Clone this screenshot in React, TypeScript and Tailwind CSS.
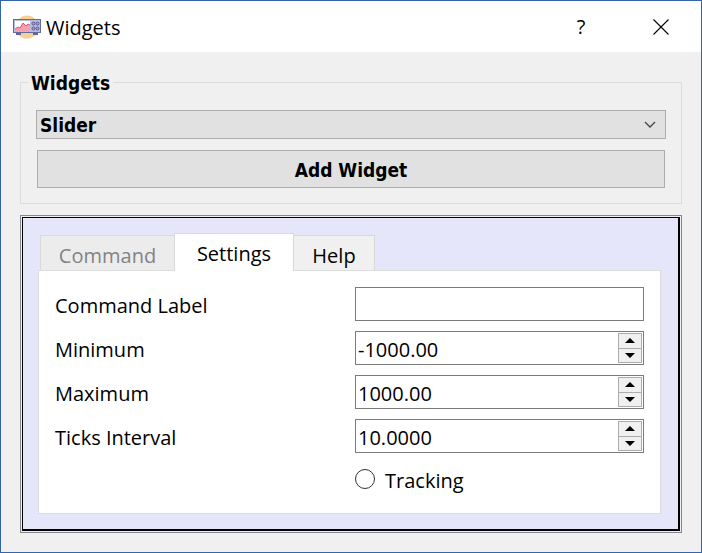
import { useState } from "react";

function AppIcon() {
  return (
    <svg width="28" height="24" viewBox="0 0 28 24" aria-hidden="true">
      <circle cx="14" cy="12" r="11.500" fill="#f7cf94" />
      <path d="M3 18h5v2H3zM20 18h5v2h-5z" fill="#5f669c" />
      <rect x="0.5" y="4.5" width="27" height="13" fill="#b3bde4" stroke="#626a9e" />
      <rect x="2" y="6" width="15" height="10" fill="#fff" />
      <path d="M2 14l3-2 2 1 3-5 3 3 2-2 2 1v6h-15z" fill="#f7a0ad" />
      <path d="M2 14l3-2 2 1 3-5 3 3 2-2 2 1" fill="none" stroke="#dc5570" />
      <g fill="#b79cc4" stroke="#5d5792">
        <circle cx="20.500" cy="8.500" r="1.500" />
        <circle cx="24.500" cy="8.500" r="1.500" />
        <circle cx="20.500" cy="13.500" r="1.500" />
        <circle cx="24.500" cy="13.500" r="1.500" />
      </g>
    </svg>
  );
}

function TitleBar() {
  return (
    <header className="flex h-[51px] items-center bg-white pr-4 pl-3">
      <AppIcon />
      <h1 className="ml-[5px] flex-1 pt-0.5 text-[20px] leading-6">Widgets</h1>
      <button type="button" aria-label="Help" className="h-10 w-12 text-[20px] leading-6">
        ?
      </button>
      <button type="button" aria-label="Close" className="ml-8 flex h-10 w-12 items-center justify-center">
        <svg width="16" height="16" viewBox="0 0 16 16" aria-hidden="true">
          <path d="M0.500 0.500l15 15M15.500 0.500l-15 15" stroke="#000" strokeWidth="1.100" />
        </svg>
      </button>
    </header>
  );
}

function SpinBox({ id, initial, decimals, step }: { id: string; initial: number; decimals: number; step: number }) {
  const [text, setText] = useState(initial.toFixed(decimals));
  const change = (by: number) => setText((t) => ((Number(t) || 0) + by).toFixed(decimals));
  return (
    <div className="flex h-[34px] border border-[#7a7a7a] bg-white p-px">
      <input
        id={id}
        className="min-w-0 flex-1 px-px pt-1 text-[20px] leading-6 outline-none"
        value={text}
        onChange={(e) => setText(e.target.value)}
      />
      <div className="flex w-6 flex-col border border-[#acacac] bg-[#f0f0f0]">
        <button
          type="button"
          aria-label="Increase"
          onClick={() => change(step)}
          className="flex flex-1 items-center justify-center border-b border-[#acacac]"
        >
          <svg width="10" height="5" viewBox="0 0 10 5" aria-hidden="true">
            <path d="M0 5L5 0L10 5z" />
          </svg>
        </button>
        <button
          type="button"
          aria-label="Decrease"
          onClick={() => change(-step)}
          className="flex flex-1 items-center justify-center"
        >
          <svg width="10" height="5" viewBox="0 0 10 5" aria-hidden="true">
            <path d="M0 0L5 5L10 0z" />
          </svg>
        </button>
      </div>
    </div>
  );
}

function Tabs() {
  return (
    <div role="tablist" className="flex items-end pl-0.5 text-[20px] leading-6">
      <button
        type="button"
        role="tab"
        disabled
        className="h-[35px] w-[135px] border border-b-0 border-[#d9d9d9] bg-[#ececec] pt-1.5 text-[#838383]"
      >
        Command
      </button>
      <button
        type="button"
        role="tab"
        aria-selected="true"
        className="-mr-px -mb-px -ml-px h-[38px] w-[120px] border border-b-0 border-[#d9d9d9] bg-white pt-0.5"
      >
        Settings
      </button>
      <button
        type="button"
        role="tab"
        className="h-[35px] w-[82px] border border-b-0 border-[#d9d9d9] bg-[#f0f0f0] pt-1.5"
      >
        Help
      </button>
    </div>
  );
}

export default function App() {
  return (
    <main className="flex min-h-screen flex-col border border-[#3465a4] bg-[#f0f0f0] font-['Open_Sans','Noto_Sans',sans-serif] text-black">
      <TitleBar />
      <div className="flex flex-1 flex-col px-[19px] pt-[17px] pb-[19px]">
        <fieldset className="min-w-0 border border-[#dcdcdc] px-[15px] pb-[15px] font-['DejaVu_Sans_Condensed','DejaVu_Sans',sans-serif] text-[19px] leading-6 font-bold">
          <legend className="-ml-2 px-[3px] pt-0.5">Widgets</legend>
          <div className="relative mt-[15px]">
            <select
              aria-label="Widget type"
              className="block h-[29px] w-full appearance-none border border-[#adadad] bg-[#e1e1e1] px-[3px] leading-6 outline-none"
            >
              <option>Slider</option>
            </select>
            <svg
              className="pointer-events-none absolute top-[11px] right-2.5"
              width="12"
              height="7"
              viewBox="0 0 12 7"
              aria-hidden="true"
            >
              <path d="M1 1l5 5 5-5" fill="none" stroke="#444" strokeWidth="1.300" />
            </svg>
          </div>
          <div className="mt-[11px] px-px">
            <button type="button" className="h-[38px] w-full border border-[#adadad] bg-[#e1e1e1] pt-0.5">
              Add Widget
            </button>
          </div>
        </fieldset>

        <div className="mt-[11px] flex flex-1 flex-col border border-[#828790] bg-[#f0f0f0] p-px">
          <section className="flex-1 border border-r-2 border-b-2 border-black bg-[#e6e6fa] py-[15px] pr-[17px] pl-[15px]">
            <Tabs />
            <div className="grid grid-cols-[300px_1fr] items-center gap-y-2.5 border border-[#dcdcdc] bg-white px-4 pt-4 pb-[18px] text-[20px] leading-6">
              <label htmlFor="command-label" className="pt-1">Command Label</label>
              <input
                id="command-label"
                className="h-[34px] w-full border border-[#7a7a7a] bg-white px-0.5 pt-1 outline-none"
              />
              <label htmlFor="minimum" className="pt-1">Minimum</label>
              <SpinBox id="minimum" initial={-1000} decimals={2} step={1} />
              <label htmlFor="maximum" className="pt-1">Maximum</label>
              <SpinBox id="maximum" initial={1000} decimals={2} step={1} />
              <label htmlFor="ticks" className="pt-1">Ticks Interval</label>
              <SpinBox id="ticks" initial={10} decimals={4} step={1} />
              <label className="col-start-2 flex h-8 items-center gap-2.5">
                <input
                  type="radio"
                  name="tracking"
                  className="size-5 appearance-none rounded-full border border-[#333] bg-white checked:bg-[#333]"
                />
                <span className="pt-1">Tracking</span>
              </label>
            </div>
          </section>
        </div>
      </div>
    </main>
  );
}
